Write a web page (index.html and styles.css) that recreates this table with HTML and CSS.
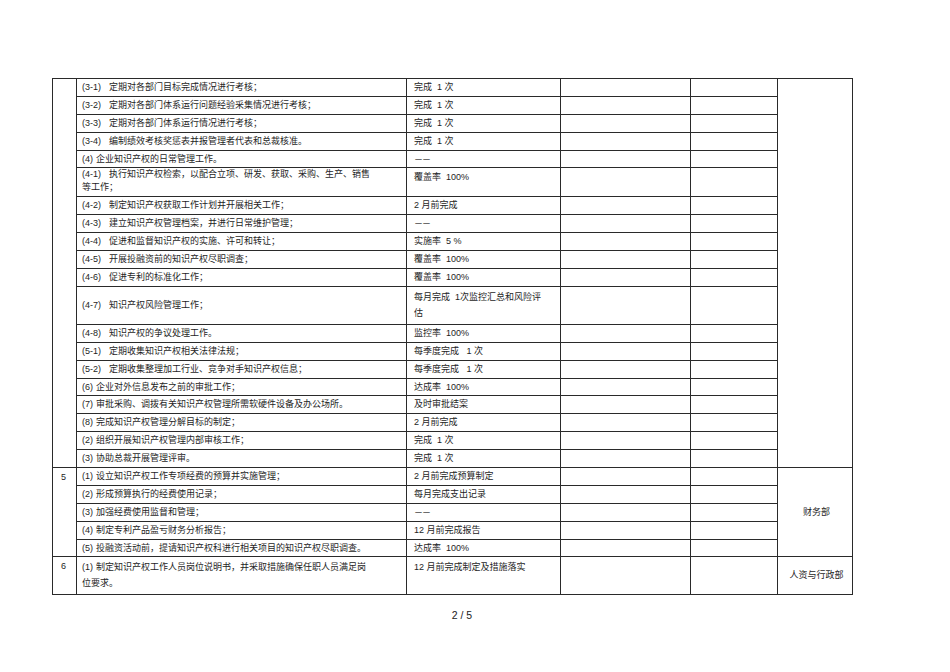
FILE: index.html
```html
<!DOCTYPE html>
<html lang="zh-CN">
<head>
<meta charset="utf-8">
<title>知识产权管理目标分解</title>
<link rel="stylesheet" href="styles.css">
</head>
<body>
<div class="page">
<table class="plan">
<colgroup>
<col class="c-no"><col class="c-task"><col class="c-goal"><col class="c-a"><col class="c-b"><col class="c-dept">
</colgroup>
<tbody>
<tr class="r">
<td class="no" rowspan="20"></td>
<td class="task"><span class="sn">(3-1)</span>定期对各部门目标完成情况进行考核；</td>
<td class="goal">完成&nbsp;&nbsp;1 次</td><td></td><td></td>
<td class="dept" rowspan="20"></td>
</tr>
<tr class="r"><td class="task"><span class="sn">(3-2)</span>定期对各部门体系运行问题经验采集情况进行考核；</td><td class="goal">完成&nbsp;&nbsp;1 次</td><td></td><td></td></tr>
<tr class="r"><td class="task"><span class="sn">(3-3)</span>定期对各部门体系运行情况进行考核；</td><td class="goal">完成&nbsp;&nbsp;1 次</td><td></td><td></td></tr>
<tr class="r"><td class="task"><span class="sn">(3-4)</span>编制绩效考核奖惩表并报管理者代表和总裁核准。</td><td class="goal">完成&nbsp;&nbsp;1 次</td><td></td><td></td></tr>
<tr class="r"><td class="task"><span class="s1">(4)</span>企业知识产权的日常管理工作。</td><td class="goal dash">－－</td><td></td><td></td></tr>
<tr class="r2"><td class="task top"><span class="sn">(4-1)</span>执行知识产权检索，以配合立项、研发、获取、采购、生产、销售<br>等工作；</td><td class="goal top2">覆盖率&nbsp;&nbsp;100%</td><td></td><td></td></tr>
<tr class="r"><td class="task"><span class="sn">(4-2)</span>制定知识产权获取工作计划并开展相关工作；</td><td class="goal">2 月前完成</td><td></td><td></td></tr>
<tr class="r"><td class="task"><span class="sn">(4-3)</span>建立知识产权管理档案，并进行日常维护管理；</td><td class="goal dash">－－</td><td></td><td></td></tr>
<tr class="r"><td class="task"><span class="sn">(4-4)</span>促进和监督知识产权的实施、许可和转让；</td><td class="goal">实施率&nbsp;&nbsp;5 %</td><td></td><td></td></tr>
<tr class="r"><td class="task"><span class="sn">(4-5)</span>开展投融资前的知识产权尽职调查；</td><td class="goal">覆盖率&nbsp;&nbsp;100%</td><td></td><td></td></tr>
<tr class="r"><td class="task"><span class="sn">(4-6)</span>促进专利的标准化工作；</td><td class="goal">覆盖率&nbsp;&nbsp;100%</td><td></td><td></td></tr>
<tr class="r3"><td class="task"><span class="sn">(4-7)</span>知识产权风险管理工作；</td><td class="goal top3">每月完成&nbsp;&nbsp;1次监控汇总和风险评<br>估</td><td></td><td></td></tr>
<tr class="r"><td class="task"><span class="sn">(4-8)</span>知识产权的争议处理工作。</td><td class="goal">监控率&nbsp;&nbsp;100%</td><td></td><td></td></tr>
<tr class="r"><td class="task"><span class="sn">(5-1)</span>定期收集知识产权相关法律法规；</td><td class="goal">每季度完成&nbsp;&nbsp;&nbsp;1 次</td><td></td><td></td></tr>
<tr class="r"><td class="task"><span class="sn">(5-2)</span>定期收集整理加工行业、竞争对手知识产权信息；</td><td class="goal">每季度完成&nbsp;&nbsp;&nbsp;1 次</td><td></td><td></td></tr>
<tr class="r"><td class="task"><span class="s1">(6)</span>企业对外信息发布之前的审批工作；</td><td class="goal">达成率&nbsp;&nbsp;100%</td><td></td><td></td></tr>
<tr class="r"><td class="task"><span class="s1">(7)</span>审批采购、调拨有关知识产权管理所需软硬件设备及办公场所。</td><td class="goal">及时审批结案</td><td></td><td></td></tr>
<tr class="r"><td class="task"><span class="s1">(8)</span>完成知识产权管理分解目标的制定；</td><td class="goal">2 月前完成</td><td></td><td></td></tr>
<tr class="r"><td class="task"><span class="s1">(2)</span>组织开展知识产权管理内部审核工作；</td><td class="goal">完成&nbsp;&nbsp;1 次</td><td></td><td></td></tr>
<tr class="r"><td class="task"><span class="s1">(3)</span>协助总裁开展管理评审。</td><td class="goal">完成&nbsp;&nbsp;1 次</td><td></td><td></td></tr>

<tr class="r sec">
<td class="no" rowspan="5">5</td>
<td class="task"><span class="s1">(1)</span>设立知识产权工作专项经费的预算并实施管理；</td>
<td class="goal">2 月前完成预算制定</td><td></td><td></td>
<td class="dept mid" rowspan="5">财务部</td>
</tr>
<tr class="r"><td class="task"><span class="s1">(2)</span>形成预算执行的经费使用记录；</td><td class="goal">每月完成支出记录</td><td></td><td></td></tr>
<tr class="r"><td class="task"><span class="s1">(3)</span>加强经费使用监督和管理；</td><td class="goal dash">－－</td><td></td><td></td></tr>
<tr class="r"><td class="task"><span class="s1">(4)</span>制定专利产品盈亏财务分析报告；</td><td class="goal">12 月前完成报告</td><td></td><td></td></tr>
<tr class="r"><td class="task"><span class="s1">(5)</span>投融资活动前，提请知识产权科进行相关项目的知识产权尽职调查。</td><td class="goal">达成率&nbsp;&nbsp;100%</td><td></td><td></td></tr>

<tr class="r4 sec">
<td class="no">6</td>
<td class="task top3"><span class="s1">(1)</span>制定知识产权工作人员岗位说明书，并采取措施确保任职人员满足岗<br>位要求。</td>
<td class="goal top3">12 月前完成制定及措施落实</td><td></td><td></td>
<td class="dept mid">人资与行政部</td>
</tr>
</tbody>
</table>
<div class="pager">2 / 5</div>
</div>
</body>
</html>
```
FILE: styles.css
```css
html, body {
  margin: 0;
  padding: 0;
  background: #ffffff;
}

body {
  font-family: "Liberation Sans", "Noto Sans CJK SC", sans-serif;
  color: #1e1e1e;
}

.page {
  padding: 78px 0 0 52px;
}

.plan {
  border-collapse: collapse;
  table-layout: fixed;
  width: 800px;
  font-size: 9px;
}

.c-no { width: 24px; }
.c-task { width: 330px; }
.c-goal { width: 154px; }
.c-a { width: 130px; }
.c-b { width: 87px; }
.c-dept { width: 75px; }

.plan td {
  border: 1px solid #2a2a2a;
  padding: 0;
  vertical-align: middle;
  line-height: 13px;
  white-space: nowrap;
}

.plan tr.r td { height: 16.9px; }
.plan tr.r2 td { height: 25px; }
.plan tr.r3 td { height: 35px; }
.plan tr.r4 td { height: 34px; }

.plan tr.sec td { border-top: 1px solid #111; }

.plan td.task { padding-left: 5px; }
.plan td.goal { padding-left: 7px; }
.plan td.dash { font-family: "Noto Sans CJK SC", sans-serif; letter-spacing: -1px; }

.plan td.top { vertical-align: top; padding-top: 0; line-height: 13px; }
.plan td.top2 { vertical-align: top; padding-top: 3px; }
.plan td.top3 { vertical-align: top; padding-top: 2px; line-height: 16px; }

.plan td.no {
  vertical-align: top;
  padding: 3px 0 0 8px;
  font-size: 9px;
}

.plan td.dept {
  text-align: center;
  vertical-align: middle;
  padding-left: 3px;
}

.sn { margin-right: 8px; }
.s1 { margin-right: 3px; }

.pager {
  width: 820px;
  text-align: center;
  font-size: 10.5px;
  margin-top: 14px;
  color: #222;
}
```
